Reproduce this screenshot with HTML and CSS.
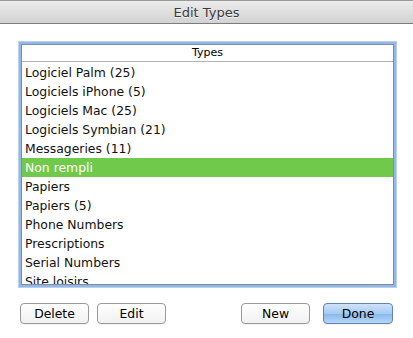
FILE: index.html
```html
<!DOCTYPE html>
<html lang="en">
<head>
  <meta charset="UTF-8">
  <title>Edit Types</title>
  <link rel="stylesheet" href="styles.css">
</head>
<body>
  <div class="window">
    <div class="titlebar">Edit Types</div>

    <div class="content">
      <div class="list-box">
        <div class="list-header">Types</div>
        <div class="list-rows">
          <div class="row">Logiciel Palm (25)</div>
          <div class="row">Logiciels iPhone (5)</div>
          <div class="row">Logiciels Mac (25)</div>
          <div class="row">Logiciels Symbian (21)</div>
          <div class="row">Messageries (11)</div>
          <div class="row selected">Non rempli</div>
          <div class="row">Papiers</div>
          <div class="row">Papiers (5)</div>
          <div class="row">Phone Numbers</div>
          <div class="row">Prescriptions</div>
          <div class="row">Serial Numbers</div>
          <div class="row">Site loisirs</div>
        </div>
      </div>

      <div class="buttons">
        <div class="group">
          <button class="btn">Delete</button>
          <button class="btn">Edit</button>
        </div>
        <div class="group group-right">
          <button class="btn">New</button>
          <button class="btn btn-default">Done</button>
        </div>
      </div>
    </div>
  </div>
</body>
</html>
```

FILE: styles.css
```css
body {
  margin: 0;
  padding: 0;
  background: #ffffff;
  font-family: "DejaVu Sans", "Liberation Sans", sans-serif;
}

.window {
  width: 413px;
  height: 338px;
  background: #ffffff;
  overflow: hidden;
}

.titlebar {
  height: 22px;
  line-height: 23px;
  text-align: center;
  font-size: 13px;
  color: #3a3a3a;
  text-shadow: 0 1px 0 rgba(255, 255, 255, 0.7);
  background: linear-gradient(to bottom, #ececec, #d2d2d2);
  border-top: 1px solid #9a9a9a;
  border-bottom: 1px solid #7c7c7c;
}

.content {
  padding: 20px 20px 0 20px;
}

.list-box {
  margin-left: 1px;
  width: 371px;
  height: 239px;
  border: 1px solid #7e8ea3;
  box-shadow: 0 0 0 2px #93b7e6, 0 0 0 3px #b9d1ef;
  overflow: hidden;
  background: #ffffff;
}

.list-header {
  height: 16px;
  line-height: 16px;
  font-size: 11px;
  text-align: center;
  color: #000;
  border-bottom: 1px solid #b4b4b4;
}

.list-rows {
  padding-top: 1px;
}

.row {
  height: 19px;
  line-height: 19px;
  padding-left: 3px;
  font-size: 12.4px;
  color: #111;
  white-space: nowrap;
}

.row.selected {
  background: #70c94a;
  color: #ffffff;
}

.buttons {
  display: flex;
  justify-content: space-between;
  margin-top: 18px;
}

.group {
  display: flex;
  gap: 8px;
}

.group-right {
  gap: 13px;
}

.btn {
  width: 69px;
  height: 21px;
  padding: 0;
  font-family: "DejaVu Sans", "Liberation Sans", sans-serif;
  font-size: 12.4px;
  color: #000;
  background: linear-gradient(to bottom, #ffffff, #f1f1f1);
  border: 1px solid #9a9a9a;
  border-radius: 4px;
  box-shadow: 0 1px 0 rgba(0, 0, 0, 0.06);
}

.btn-default {
  width: 70px;
  background: linear-gradient(to bottom, #cfe3fa 0%, #a6cbf3 50%, #86b7ee 51%, #b6d7f8 100%);
  border-color: #5f84b8;
}
```
